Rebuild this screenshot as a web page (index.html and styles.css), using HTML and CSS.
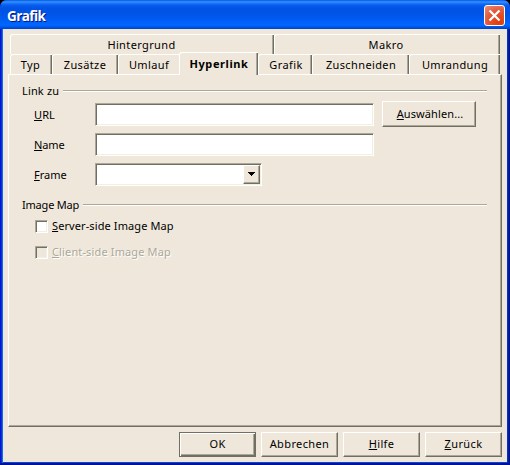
FILE: index.html
```html
<!DOCTYPE html>
<html lang="de">
<head>
<meta charset="utf-8">
<title>Grafik</title>
<link rel="stylesheet" href="styles.css">
</head>
<body>
<div class="window">
  <header class="titlebar">
    <span class="title">Grafik</span>
    <button class="close" aria-label="Schließen">
      <svg width="21" height="21" viewBox="0 0 21 21"><path d="M5.5 5.5 15.5 15.5M15.5 5.5 5.5 15.5" stroke="#fff" stroke-width="2.3" fill="none"/></svg>
    </button>
  </header>
  <main class="content">
    <nav class="tabs back">
      <div class="tab hintergrund"><span>Hintergrund</span></div>
      <div class="tab makro"><span>Makro</span></div>
    </nav>
    <nav class="tabs front">
      <div class="tab typ"><span>Typ</span></div>
      <div class="tab zusaetze"><span>Zusätze</span></div>
      <div class="tab umlauf"><span>Umlauf</span></div>
      <div class="tab active"><span>Hyperlink</span></div>
      <div class="tab grafik"><span>Grafik</span></div>
      <div class="tab zuschneiden"><span>Zuschneiden</span></div>
      <div class="tab umrandung"><span>Umrandung</span></div>
    </nav>
    <section class="panel">
      <div class="group"><span class="t-link">Link zu</span><i></i></div>
      <div class="rows">
        <div class="row"><label class="t-url"><u>U</u>RL</label><div class="field"></div><button class="btn choose"><span><u>A</u>uswählen...</span></button></div>
        <div class="row"><label class="t-name"><u>N</u>ame</label><div class="field"></div></div>
        <div class="row"><label class="t-frame"><u>F</u>rame</label><div class="field combo"><div class="drop"><svg width="7" height="4" viewBox="0 0 7 4" shape-rendering="crispEdges"><path d="M0 0h7v1H6v1H5v1H4v1H3V3H2V2H1V1H0z"/></svg></div></div></div>
      </div>
      <div class="group"><span class="t-map">Image Map</span><i></i></div>
      <div class="check"><div class="box"></div><span class="t-server"><u>S</u>erver-side Image Map</span></div>
      <div class="check disabled"><div class="box"></div><span class="t-client"><u>C</u>lient-side Image Map</span></div>
    </section>
    <footer class="buttons">
      <button class="btn default"><span>OK</span></button>
      <button class="btn"><span>Abbrechen</span></button>
      <button class="btn"><span><u>H</u>ilfe</span></button>
      <button class="btn"><span><u>Z</u>urück</span></button>
    </footer>
  </main>
</div>
</body>
</html>
```
FILE: styles.css
```css
:root {
  --face: linear-gradient(135deg, #f2e6da 25%, #ece9dc 25% 50%, #f2e6da 50% 75%, #ece9dc 75%) 0 0 / 4px 4px;
  --shade: #aca899;
  --dark: #716f64;
}
* { box-sizing: border-box; }
body {
  margin: 0;
  background: #000;
  font: 11px/14px "Noto Sans", sans-serif;
  letter-spacing: .38px;
  color: #000;
  overflow: hidden;
}
span, label { white-space: nowrap; }
u { text-decoration: underline; text-decoration-thickness: 1px; text-underline-offset: 1px; text-decoration-skip-ink: none; }
button { font: inherit; letter-spacing: inherit; color: inherit; padding: 0; margin: 0; }

.window {
  width: 510px;
  height: 465px;
  display: flex;
  flex-direction: column;
  padding: 0 3px 3px;
  background: linear-gradient(90deg, #0019cf 0 1px, #0831d9 1px 2px, #166aee 2px 3px, #0048e0 3px 507px, #0032d0 507px 508px, #001ea0 508px 509px, #00138c 509px);
  border-radius: 7px 7px 0 0;
  overflow: hidden;
  box-shadow: inset 0 -2px #00138c;
}
.titlebar {
  height: 29px;
  flex: none;
  margin: 0 -3px;
  padding: 5px 5px 0 7px;
  display: flex;
  justify-content: space-between;
  background: linear-gradient(#0058e6 0, #3a93ff 2px, #1c7afa 3px, #0a5ff0 5px, #0053e4 8px, #0054e6 14px, #005cf6 20px, #0068ff 25px, #0060f8 26px, #0040c8 29px);
}
.title {
  font: bold 13.5px/22px "Open Sans", sans-serif;
  letter-spacing: -.6px;
  color: #fff;
  text-shadow: 1px 1px #0a1883;
}
.close {
  width: 21px;
  height: 21px;
  border: 1px solid #fff;
  border-radius: 3px;
  background: radial-gradient(circle at 75% 85%, #e03c08, #e2583a 55%, #ee9078);
  display: flex;
}
.close svg { margin: -1px; flex: none; }

.content {
  height: 433px;
  padding: 5px 5px 0;
  background: var(--face);
}
.tabs { display: flex; height: 20px; padding: 0 1px 0 2px; }
.front { align-items: flex-end; }
.tab {
  position: relative;
  height: 20px;
  flex: none;
  border-top: 1px solid #fff;
  border-left: 1px solid #fff;
  border-radius: 3px 0 0 0;
  box-shadow: inset -1px 0 var(--dark), inset -2px 0 var(--shade);
  display: flex;
  justify-content: center;
  padding-top: 3px;
}
.hintergrund { width: 264px; padding-right: 2px; }
.makro { width: 226px; padding-right: 3px; }
.typ { width: 42px; padding-right: 2px; }
.zusaetze { width: 66px; padding-right: 1px; }
.umlauf { width: 61px; box-shadow: none; }
.grafik { width: 54px; padding-left: 1px; }
.zuschneiden { width: 97px; }
.umrandung { width: 91px; }
.active {
  z-index: 1;
  width: 79px;
  height: 23px;
  margin-bottom: -1px;
  background: var(--face);
  font-weight: bold;
  padding-top: 4px;
  letter-spacing: .6px;
}

.panel {
  width: 494px;
  height: 353px;
  border: 1px solid #fff;
  border-right-color: var(--dark);
  border-bottom-color: var(--dark);
  box-shadow: inset -1px -1px var(--shade);
  padding: 9px 14px 0 13px;
}
.group { display: flex; height: 14px; gap: 4px; }
.t-link { letter-spacing: .15px; }
.t-map { letter-spacing: -.2px; }
.group i { flex: 1; height: 2px; margin-top: 6px; background: linear-gradient(var(--shade) 50%, #fff 50%); }
.rows { margin: 5px 0 5px 12px; }
.row { display: flex; height: 30px; }
.row label { width: 61px; padding-top: 5px; }
.t-url { letter-spacing: .1px; }
.t-name { letter-spacing: -.1px; }
.t-frame { letter-spacing: 0; }
.field {
  width: 279px;
  height: 23px;
  background: #fff;
  border: 1px solid #fff;
  border-top-color: var(--shade);
  border-left-color: var(--shade);
  box-shadow: inset 1px 1px var(--dark), inset -1px -1px #f1efe2;
}
.combo { width: 167px; padding: 1px; display: flex; justify-content: flex-end; }
.drop, .btn {
  border: 1px solid #fff;
  border-right-color: var(--dark);
  border-bottom-color: var(--dark);
  box-shadow: inset -1px -1px var(--shade);
  background: var(--face);
  display: flex;
  justify-content: center;
}
.drop { width: 17px; height: 19px; padding-top: 6px; }
.btn { width: 77px; height: 25px; padding-top: 4px; border-radius: 0; }
.choose { width: 94px; height: 26px; margin: -2px 0 0 8px; padding: 5px 0 0 2px; letter-spacing: .1px; }
.default {
  border-color: var(--dark);
  box-shadow: inset 1px 1px #fff, inset -1px -1px var(--dark), inset -2px -2px var(--shade);
}
.check { display: flex; height: 14px; gap: 4px; margin: 7px 0 0 13px; }
.disabled { margin-top: 12px; color: var(--shade); text-shadow: 1px 1px #fff; }
.t-server { letter-spacing: .1px; }
.t-client { letter-spacing: .14px; }
.box {
  width: 13px;
  height: 13px;
  margin-top: 1px;
  background: #fff;
  border: 1px solid #fff;
  border-top-color: var(--shade);
  border-left-color: var(--shade);
  box-shadow: inset 1px 1px var(--dark), inset -1px -1px #f1efe2;
}
.disabled .box { background: var(--face); }
.buttons { display: flex; justify-content: flex-end; gap: 5px; padding-top: 5px; }
```
